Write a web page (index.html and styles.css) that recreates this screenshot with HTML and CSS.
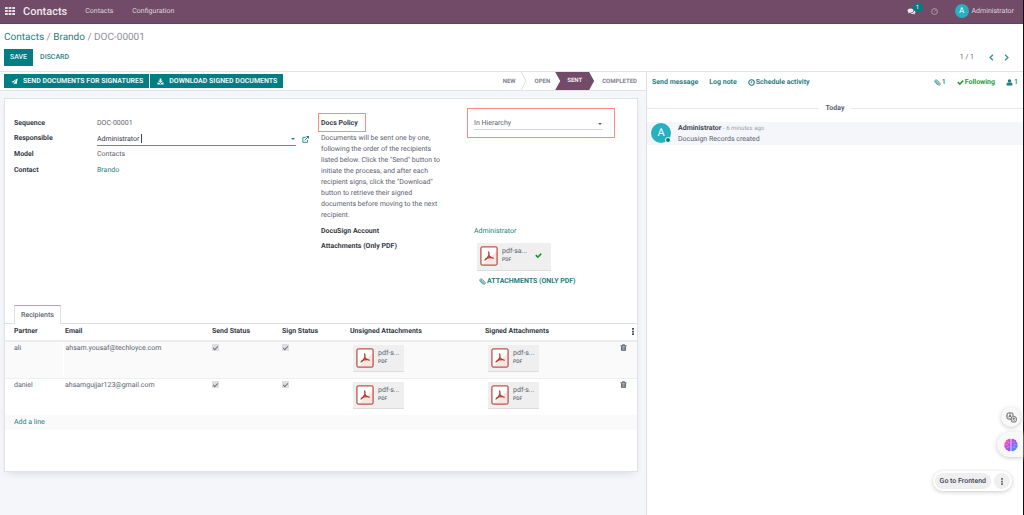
FILE: index.html
```html
<!DOCTYPE html>
<html lang="en">
<head>
<meta charset="utf-8">
<title>DOC-00001</title>
<link rel="stylesheet" href="styles.css">
</head>
<body>
<svg class="defs" aria-hidden="true">
  <symbol id="i-pdf" viewBox="0 0 18 20"><rect x="1" y="1" width="16" height="18" rx="1.5" fill="#fff"/><path d="M17 5v14H2z" fill="#f9e6e4"/><rect x=".9" y=".9" width="16.2" height="18.2" rx="1.5" fill="none" stroke="#c0564b" stroke-width="1.3"/><path d="M8.600 6c.8 1.600.4 2.700 0 3.800C7.800 11.700 6.400 13.200 5 14M8.800 9.400c1 1.700 2.200 2.500 4.400 2.700M6 12.500c1.900-.8 3.600-1 5.800-.9" fill="none" stroke="#b9382b" stroke-width="1.300" stroke-linecap="round"/></symbol>
  <symbol id="i-check" viewBox="0 0 16 16"><path d="M.5 8.500L3 5.800l3.500 3.400L13 2.500l2.500 2.700-9 9.100z" fill="currentColor"/></symbol>
  <symbol id="i-clip" viewBox="0 0 16 16"><path d="M12 11.500L6.300 5.300c-1.500-1.500-3.300.4-2 1.900l5.700 6c2.800 2.700 6-.7 3.500-3.400L7.500 3.200C4 0-.3 4 2.700 7.500l6 6.300" fill="none" stroke="currentColor" stroke-width="1.700" stroke-linecap="round"/></symbol>
  <symbol id="i-clock" viewBox="0 0 16 16"><circle cx="8" cy="8" r="6.200" fill="none" stroke="currentColor" stroke-width="2.400"/><path d="M8.500 4.500v4H5.500" fill="none" stroke="currentColor" stroke-width="1.800"/></symbol>
  <symbol id="i-trash" viewBox="0 0 16 16"><path d="M1 4h14M5.500 4V1.800h5V4" fill="none" stroke="currentColor" stroke-width="2"/><path d="M3.300 5v9.500h9.400V5" fill="#aaaeb5" stroke="currentColor" stroke-width="2"/><path d="M6.200 6v7M9.800 6v7" stroke="currentColor" stroke-width="1.200"/></symbol>
</svg>

<header class="navbar">
  <button class="apps" aria-label="Apps"><svg viewBox="0 0 10 8"><path d="M0 0h2.800v2H0zM3.600 0h2.800v2H3.600zM7.200 0H10v2H7.200zM0 3h2.800v2H0zM3.600 3h2.800v2H3.600zM7.200 3H10v2H7.200zM0 6h2.800v2H0zM3.600 6h2.800v2H3.600zM7.200 6H10v2H7.200z" fill="#e6dfe4"/></svg></button>
  <a class="brand" href="#">Contacts</a>
  <nav class="menu"><a href="#">Contacts</a><a href="#">Configuration</a></nav>
  <div class="systray">
    <button class="chat" aria-label="Messages"><svg viewBox="0 0 18 14"><path d="M7 1c3.500 0 6 1.900 6 4.200S10.500 9.400 7 9.400l-1.300-.1C4.600 10.200 3.200 10.700 1.800 10.700c.8-.7 1.200-1.400 1.300-2.200C1.800 7.700 1 6.500 1 5.200 1 2.900 3.500 1 7 1z" fill="#efe9ed"/><path d="M14.200 4.500c1.800.7 2.800 1.900 2.800 3.300 0 1.300-.8 2.400-2 3.100.1.800.6 1.500 1.300 2.100-1.400 0-2.800-.4-3.900-1.300-2.300.3-4.300-.3-5.500-1.300 4.300 0 7.600-2.400 7.300-5.900z" fill="#efe9ed"/></svg><span class="badge">1</span></button>
    <button class="clock" aria-label="Activities"><svg viewBox="0 0 16 16"><circle cx="8" cy="8" r="6.800" fill="none" stroke="currentColor" stroke-width="1.600"/><path d="M8 8l3-3M8 3v1M3 8h1M12 8h1" stroke="currentColor" stroke-width="1.600"/></svg></button>
    <button class="user"><span class="avatar small">A</span>Administrator</button>
  </div>
</header>

<section class="control-panel">
  <nav class="breadcrumb"><a href="#">Contacts</a> / <a href="#">Brando</a> / <span>DOC-00001</span></nav>
  <div class="cp-row">
    <button class="btn primary save">Save</button>
    <button class="btn link">Discard</button>
    <div class="pager"><span>1 / 1</span>
      <button aria-label="Previous"><svg viewBox="0 0 8 10"><path d="M6 1L2 5l4 4" fill="none" stroke="currentColor" stroke-width="2"/></svg></button>
      <button aria-label="Next"><svg viewBox="0 0 8 10"><path d="M2 1l4 4-4 4" fill="none" stroke="currentColor" stroke-width="2"/></svg></button>
    </div>
  </div>
</section>

<div class="content">
  <main class="form-view">
    <div class="statusbar">
      <div class="actions">
        <button class="btn primary"><svg viewBox="0 0 16 16"><path d="M15.500.5L13 14.500l-4.300-1.800L6.500 15.500v-4L13 3.500 4.800 10.600.8 9z" fill="currentColor"/></svg>Send Documents for Signatures</button>
        <button class="btn primary"><svg viewBox="0 0 16 16"><path d="M6 1h4v5h3.500L8 11.500 2.500 6H6zM1 10.500h3.500L8 13.500l3.500-3H15V15H1z" fill="currentColor"/></svg>Download Signed Documents</button>
      </div>
      <ol class="stages">
        <li>New</li>
        <li class="sep"><svg viewBox="0 0 6 18"><path d="M0 0l5 9-5 9" fill="none" stroke="#dcdfe4" stroke-width="1"/></svg></li>
        <li>Open</li>
        <li class="current" aria-current="step">Sent</li>
        <li>Completed</li>
      </ol>
    </div>

    <div class="sheet">
      <div class="groups">
        <div class="group first">
          <span class="label">Sequence</span><span>DOC-00001</span>
          <label class="label" for="responsible">Responsible</label>
          <div class="many2one"><div class="field"><input id="responsible" type="text" value="Administrator"><i class="caret"></i><i class="arrow"></i></div>
            <button aria-label="Open record"><svg viewBox="0 0 16 16"><path d="M9 3H2v11.500h10.500V9" fill="none" stroke="currentColor" stroke-width="2"/><path d="M6 10l7-7" stroke="currentColor" stroke-width="2.200"/><path d="M9 0h7v7z" fill="currentColor"/></svg></button></div>
          <span class="label">Model</span><span>Contacts</span>
          <span class="label">Contact</span><a href="#">Brando</a>
        </div>
        <div class="group second">
          <label class="label marked name" for="policy">Docs Policy</label>
          <div class="marked choice"><select id="policy"><option>In Hierarchy</option></select><i class="arrow"></i></div>
          <p class="help">Documents will be sent one by one, following the order of the recipients listed below. Click the "Send" button to initiate the process, and after each recipient signs, click the "Download" button to retrieve their signed documents before moving to the next recipient.</p>
          <span class="label">DocuSign Account</span><a href="#">Administrator</a>
          <span class="label">Attachments (Only PDF)</span>
          <div class="uploads">
            <div class="file wide"><svg class="pdf"><use href="#i-pdf"/></svg><div class="meta"><span>pdf-sa...</span><small>PDF</small></div><svg class="ok"><use href="#i-check"/></svg></div>
            <button class="attach"><svg><use href="#i-clip"/></svg>Attachments (Only PDF)</button>
          </div>
        </div>
      </div>

      <div class="tabs" role="tablist"><button class="tab" role="tab" aria-selected="true">Recipients</button></div>
      <table class="list">
        <colgroup><col class="c-partner"><col><col class="c-send"><col class="c-sign"><col class="c-files"><col class="c-files"><col class="c-end"></colgroup>
        <thead><tr><th>Partner</th><th>Email</th><th>Send Status</th><th>Sign Status</th><th>Unsigned Attachments</th><th>Signed Attachments</th><th class="more"><button aria-label="Optional columns"><svg viewBox="0 0 2 8"><path d="M0 0h2v2H0zM0 3h2v2H0zM0 6h2v2H0z" fill="currentColor"/></svg></button></th></tr></thead>
        <tbody>
          <tr>
            <td>ali</td><td>ahsam.yousaf@techloyce.com</td>
            <td><input type="checkbox" aria-label="Sent to ali" checked disabled></td><td><input type="checkbox" aria-label="Signed by ali" checked disabled></td>
            <td><div class="file"><svg class="pdf"><use href="#i-pdf"/></svg><div class="meta"><span>pdf-s...</span><small>PDF</small></div></div></td>
            <td><div class="file"><svg class="pdf"><use href="#i-pdf"/></svg><div class="meta"><span>pdf-s...</span><small>PDF</small></div></div></td>
            <td><button aria-label="Delete ali"><svg class="trash"><use href="#i-trash"/></svg></button></td>
          </tr>
          <tr>
            <td>daniel</td><td>ahsamgujjar123@gmail.com</td>
            <td><input type="checkbox" aria-label="Sent to daniel" checked disabled></td><td><input type="checkbox" aria-label="Signed by daniel" checked disabled></td>
            <td><div class="file"><svg class="pdf"><use href="#i-pdf"/></svg><div class="meta"><span>pdf-s...</span><small>PDF</small></div></div></td>
            <td><div class="file"><svg class="pdf"><use href="#i-pdf"/></svg><div class="meta"><span>pdf-s...</span><small>PDF</small></div></div></td>
            <td><button aria-label="Delete daniel"><svg class="trash"><use href="#i-trash"/></svg></button></td>
          </tr>
          <tr class="add"><td colspan="7"><a href="#">Add a line</a></td></tr>
        </tbody>
      </table>
    </div>
  </main>

  <aside class="chatter">
    <div class="topbar">
      <button>Send message</button><button>Log note</button><button><svg><use href="#i-clock"/></svg>Schedule activity</button>
      <div class="right"><button class="thin"><svg><use href="#i-clip"/></svg>1</button><button class="following"><svg><use href="#i-check"/></svg>Following</button><button class="thin"><svg viewBox="0 0 16 16"><circle cx="8" cy="4.500" r="4" fill="currentColor"/><path d="M1.500 15c-1-4 .5-7 3-7 2 1.500 5 1.500 7 0 2.500 0 4 3 3 7z" fill="currentColor"/></svg>1</button></div>
    </div>
    <div class="day"><span>Today</span></div>
    <article class="message">
      <span class="avatar">A<i class="online"></i></span>
      <div><p class="author"><strong>Administrator</strong> <small>- 6 minutes ago</small></p><p>Docusign Records created</p></div>
    </article>
  </aside>
</div>

<button class="float translate" aria-label="Translate"><svg viewBox="0 0 22 22"><path d="M12 14H5a3 3 0 0 1-3-3V5a3 3 0 0 1 3-3h6a3 3 0 0 1 3 3v3" fill="none" stroke="#555" stroke-width="2"/><path d="M5.500 11L8 5l2 5M6.500 9h3" fill="none" stroke="#555" stroke-width="1.600"/><rect x="10.500" y="9.500" width="10" height="10.500" rx="3" fill="#f8f8f8" stroke="#555" stroke-width="1.800"/><path d="M13 13h5M15.500 11.500v1.500M17 13c-.5 2-2 3.500-4 4M14 14.500c1 1.500 2 2 3.500 2.500" fill="none" stroke="#555" stroke-width="1.200"/></svg></button>
<button class="float brain" aria-label="Assistant"><svg viewBox="0 0 26 26"><defs><linearGradient id="g-brain" x1="0" y1="0" x2="26" y2="22" gradientUnits="userSpaceOnUse"><stop offset="0" stop-color="#ff8a4c"/><stop offset=".3" stop-color="#e846c8"/><stop offset=".6" stop-color="#8d5cf6"/><stop offset="1" stop-color="#2fa8ff"/></linearGradient></defs><path d="M12.300 2.500v21c-2 1.800-4.800 1.200-5.800-.8-2.500 0-4-1.800-3.800-4C.3 17.200 0 14.500 1.200 12.800 0 10.500 1 8 3 7.200 3.200 4.500 5 3 7 3c1.500-1.800 4-1.800 5.300-.5zM13.700 2.500v21c2 1.800 4.800 1.200 5.800-.8 2.500 0 4-1.800 3.800-4 2.400-1.500 2.700-4.200 1.500-5.900 1.200-2.300.2-4.800-1.800-5.600C22.800 4.500 21 3 19 3c-1.500-1.800-4-1.800-5.300-.5z" fill="url(#g-brain)"/><path d="M7 6c0 2 1 3 3 3M3 12c2-1 4 0 4 2M6 19c0-2 1.500-3 4-2.500M19 6c0 2-1 3-3 3M23 12c-2-1-4 0-4 2M20 19c0-2-1.500-3-4-2.500" fill="none" stroke="#fff" stroke-opacity=".7" stroke-width="1"/></svg></button>
<div class="float frontend"><button class="go">Go to Frontend</button><button class="dots" aria-label="More"><svg viewBox="0 0 2 8"><path d="M0 0h2v2H0zM0 3h2v2H0zM0 6h2v2H0z" fill="currentColor"/></svg></button></div>
</body>
</html>
```
FILE: styles.css
```css
* { box-sizing: border-box; }
body {
  margin: 0;
  min-height: 100vh;
  display: flex;
  flex-direction: column;
  font: 7px/11px Roboto, "Liberation Sans", sans-serif;
  text-rendering: geometricPrecision;
  color: #5c6370;
  background: #fff;
  border-right: 1px solid #111;
}
button, input, select { font: inherit; color: inherit; background: none; border: 0; padding: 0; margin: 0; text-rendering: inherit; }
button { display: flex; align-items: center; white-space: nowrap; }
a { color: #1f7f82; text-decoration: none; }
p { margin: 0; }
svg { display: block; flex: none; width: 7px; height: 7px; }
.defs { position: absolute; width: 0; height: 0; }

.navbar { display: flex; align-items: center; height: 24px; padding: 0 9px 1px 5px; background: #714b67; color: #dfd5dc; border-bottom: 1px solid #64425b; }
.navbar a { color: inherit; }
.apps svg { width: 10px; height: 8px; }
.navbar .brand { margin-left: 8px; font-size: 11px; font-weight: 500; color: #eee7ec; }
.menu { display: flex; gap: 19px; margin-left: 18px; }
.systray { display: flex; align-items: center; margin-left: auto; }
.chat { position: relative; }
.chat svg { width: 9px; height: 7px; }
.badge { position: absolute; left: 6px; top: -5px; width: 10px; height: 9px; border-radius: 5px; background: #017e84; color: #fff; font-size: 6px; line-height: 9px; text-align: center; }
.clock { margin: 0 17px 0 15px; color: #c5b4c0; }
.user { gap: 3px; }
.avatar { position: relative; flex: none; width: 20px; height: 20px; border-radius: 50%; background: #26b0c0; color: #fff; font-size: 11px; line-height: 20px; text-align: center; }
.avatar.small { width: 14px; height: 14px; font-size: 8px; line-height: 14px; }

.control-panel { padding: 8px 13px 5px 4px; border-bottom: 1px solid #e2e4e8; }
.breadcrumb { font-size: 10px; line-height: 12px; color: #8f8f9a; }
.cp-row { display: flex; align-items: center; margin-top: 5px; }
.btn { height: 14px; padding: 0 6px; text-transform: uppercase; font-weight: 700; color: #1f7f82; }
.btn.primary { background: #017e84; color: #e4f3f3; }
.btn svg { margin: 0 5px 0 1px; }
.btn.save { height: 17px; font-weight: 500; }
.btn.link { padding: 0 7px; font-weight: 500; }
.pager { display: flex; align-items: center; gap: 8px; margin-left: auto; }
.pager button { color: #3f9497; }
.pager span { margin-right: 6px; }

.content { flex: 1; display: grid; grid-template-columns: 647fr 376fr; }
.form-view { min-width: 0; background: #f5f6fa; border-right: 1px solid #dcdfe4; }
.statusbar { display: flex; justify-content: space-between; align-items: center; height: 19px; padding-left: 4px; background: #fff; border-bottom: 1px solid #e2e4e8; }
.actions { display: flex; gap: 1px; }
.stages { display: flex; align-items: center; height: 18px; margin: 0; padding: 0 9px 0 0; list-style: none; text-transform: uppercase; font-size: 6px; font-weight: 700; color: #85858f; }
.stages .sep { margin: 0 8px 0 5px; }
.sep svg { width: 6px; height: 18px; }
.stages .current { margin: 0 8px 0 5px; padding: 0 12px; line-height: 18px; color: #f1e9ee; background: #714b67; clip-path: polygon(0 0, calc(100% - 5px) 0, 100% 50%, calc(100% - 5px) 100%, 0 100%, 5px 50%); }

.sheet { margin: 7px 8px 43px 4px; min-height: 374px; padding-top: 18px; background: #fff; border: 1px solid #dfe2e7; box-shadow: 0 4px 8px -4px #cdd1da; }
.groups { display: grid; grid-template-columns: 295fr 307fr; gap: 12px; min-height: 188px; padding: 0 9px; }
.group { display: grid; align-content: start; align-items: start; }
.first { grid-template-columns: 83px 1fr; grid-template-rows: 15px 16px 16px 16px; line-height: 12px; }
.label { font-weight: 700; color: #363c47; }
.many2one { display: flex; align-items: center; gap: 6px; color: #1f7f82; }
.field { position: relative; flex: 1; border-bottom: 1px solid #40999c; }
.field input { display: block; width: 100%; height: 13px; color: #343a46; outline: 0; }
.caret { position: absolute; left: 44px; top: 2px; width: 1px; height: 9px; background: #444; }
.arrow { position: absolute; right: 1px; top: 6px; border: 2px solid transparent; border-top-color: currentColor; border-bottom: 0; }
.second { grid-template-columns: 153px 1fr; grid-template-rows: 16px auto 15px auto; line-height: 12px; }
.marked { position: relative; }
.marked::after { content: ""; position: absolute; border: 1px solid #fa8a8a; pointer-events: none; }
.name { justify-self: start; }
.name::after { inset: -4px -8px -3px -3px; }
.choice { height: 13px; margin-right: 25px; }
.choice::after { inset: -9px -12px -8px -7px; }
.choice select { display: block; appearance: none; width: 100%; height: 13px; border-bottom: 1px solid #d5d8dd; }
.help { grid-column: 1 / -1; width: 124px; margin-bottom: 4px; line-height: 11px; }
.uploads { padding: 3px 0 0 3px; }
.file { display: flex; gap: 4px; width: 51px; height: 27px; padding: 3px 0 0 3px; background: #efeff0; border-bottom: 1px solid #dddde0; }
.file.wide { width: 74px; height: 28px; }
.pdf { width: 18px; height: 20px; }
.meta { display: flex; flex-direction: column; line-height: 10px; }
.meta small { font-size: 5px; line-height: 8px; font-weight: 500; }
.ok { margin: 6px 0 0 4px; color: #16962b; }
.attach { gap: 1px; margin: 4px 0 0 2px; text-transform: uppercase; font-weight: 700; color: #1f7f82; }

.tabs { display: flex; padding-left: 9px; border-bottom: 1px solid #dcdfe4; }
.tab { height: 19px; margin-bottom: -1px; padding: 0 6px; background: #fff; border: 1px solid #dcdfe4; border-top-color: #b9a3b3; border-bottom: 0; font-weight: 500; }
.list { width: 100%; table-layout: fixed; border-collapse: collapse; }
.c-partner { width: 58px; }
.c-send { width: 70px; }
.c-sign { width: 68px; }
.c-files { width: 135px; }
.c-end { width: 19px; }
th { height: 17px; padding: 0 0 2px 2px; text-align: left; font-weight: 700; color: #363c47; white-space: nowrap; border-bottom: 2px solid #ebecee; }
.more { padding-right: 3px; }
.more button, .more svg { margin-left: auto; }
.more svg, .dots svg { width: 2px; height: 7px; }
td { height: 37px; padding: 1px 0 0 2px; vertical-align: top; border-bottom: 1px solid #eceef0; }
th:first-child, td:first-child { padding-left: 9px; }
tbody tr:first-child { background: #fafafa; }
tr:first-child td:first-child { border-right: 1px solid #fff; }
tr:nth-child(2) td { border-bottom: 0; }
td .file { margin: 2px 0 0 3px; }
.trash { color: #555b66; }
td button { margin-top: 1px; }
td input { appearance: none; display: block; width: 7px; height: 7px; margin-top: 1px; background: #dcdee2; }
td input:checked::before { content: ""; display: block; width: 4px; height: 2px; margin-left: 1px; border: solid #777; border-width: 0 0 1px 1px; transform: translateY(2px) rotate(-45deg); }
.list .add td { height: 15px; padding-top: 2px; border: 0; background: #fafafa; }

.topbar { display: flex; align-items: center; gap: 11px; height: 20px; padding: 0 5px; font-weight: 700; color: #1f7f82; }
.topbar svg { margin-right: 1px; }
.right { display: flex; gap: 11px; margin-left: auto; }
.following { color: #2a9d3e; }
.thin { font-weight: 500; }
.day { display: flex; align-items: center; gap: 7px; margin: 11px 0 8px; font-weight: 700; }
.day::before, .day::after { content: ""; flex: 1; height: 1px; background: #e6e7ea; }
.message { display: flex; gap: 7px; height: 23px; padding: 1px 4px; background: #f5f6fa; }
.author strong { color: #434a57; font-weight: 700; }
.author small { font-size: 6px; color: #9a9ea8; }
.online { position: absolute; right: 0; bottom: 0; width: 6px; height: 6px; border-radius: 50%; background: #017e84; border: 1px solid #f5f6fa; }

.float { position: fixed; display: flex; align-items: center; background: #f8f8f8; box-shadow: 0 1px 4px #c9c9cc; }
.translate { right: 3px; bottom: 88px; width: 20px; height: 20px; border-radius: 50%; justify-content: center; }
.translate svg { width: 11px; height: 11px; }
.brain { right: 1px; bottom: 58px; width: 26px; height: 25px; padding-left: 7px; border-radius: 13px 0 0 13px; }
.brain svg { width: 14px; height: 14px; }
.frontend { right: 12px; bottom: 24px; gap: 3px; padding: 2px; border-radius: 10px; background: #fff; }
.go { height: 16px; padding: 0 5px; border-radius: 8px; background: #efeff0; color: #434652; font-weight: 500; }
.dots { justify-content: center; width: 16px; height: 16px; border-radius: 50%; background: #efeff0; }
```
